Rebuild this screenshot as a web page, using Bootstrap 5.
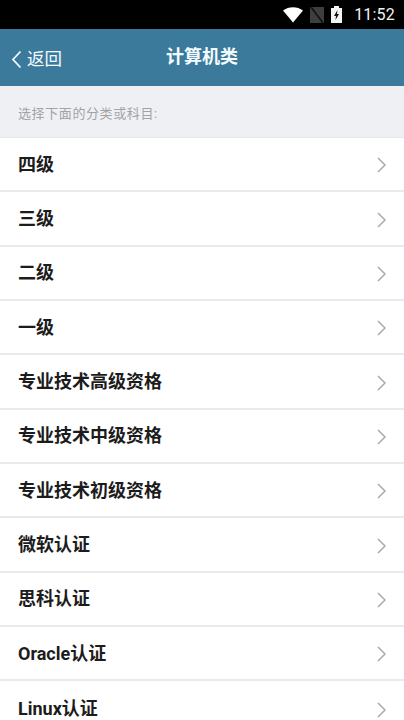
<!DOCTYPE html>
<html lang="zh-CN">
<head>
<meta charset="utf-8">
<title>计算机类</title>
<link rel="stylesheet" href="https://cdn.jsdelivr.net/npm/bootstrap@5.3.0/dist/css/bootstrap.min.css">
<style>
html,body{height:720px;overflow:hidden}
body{background:#eff0f4;font-family:Roboto,"Noto Sans CJK SC",sans-serif}
.sbar{height:29px;background:#000;color:#f2f2f2;font-size:16px;padding-right:9px;gap:7px}
.sbar .tm{margin-left:5px;line-height:1;letter-spacing:.2px}
.hdr{height:57px;background:#3b7a9b;color:#f4fbff}
.hdr .back{left:11px;top:0;bottom:0;font-size:17.5px;gap:5px;padding-top:4px}
.hdr .ttl{font-size:18px;font-weight:700;margin-top:-3px}
.hint{height:52px;font-size:13px;color:#a2a3a6;padding:5px 0 0 18px;letter-spacing:.6px;border-bottom:1px solid #e6e7ea}
.rows{background:#fff}
.rows .rowi{height:54.35px;padding:0 18px;font-size:18px;font-weight:700;color:#1c1c1c;border-width:0 0 2px;border-style:solid;border-color:#e9eaed;background:#fff}
.rowi svg{margin-top:2px}
</style>
</head>
<body>
<div class="sbar d-flex align-items-center justify-content-end">
<svg width="20" height="16" viewBox="0 0 20 16"><path d="M0 3.5C5.5-1 14.500-1 20 3.500L10 15.500Z" fill="#fff"/></svg>
<svg width="14" height="16" viewBox="0 0 14 16"><path d="M0 16V0H14V16Z" fill="#3e3e3e"/><path d="M1 0L13 16" stroke="#111" stroke-width="1.600"/></svg>
<svg width="11" height="17" viewBox="0 0 11 17"><path d="M3 0H8V2H11V17H0V2H3Z" fill="#f5f5f5"/><path d="M6.500 4L3 10H5L4.500 14L8 8H6Z" fill="#111"/></svg>
<span class="tm">11:52</span>
</div>
<div class="hdr position-relative d-flex align-items-center justify-content-center">
<div class="back position-absolute d-flex align-items-center">
<svg width="11" height="19" viewBox="0 0 11 19" fill="none"><path d="M9.500 1.500L2 9.500L9.500 17.500" stroke="#f4fbff" stroke-width="1.800"/></svg>
<span>返回</span>
</div>
<div class="ttl">计算机类</div>
</div>
<div class="hint d-flex align-items-center">选择下面的分类或科目:</div>
<div class="rows list-group list-group-flush rounded-0">
<div class="rowi list-group-item d-flex align-items-center justify-content-between"><span>四级</span><svg width="9" height="16" viewBox="0 0 9 16" fill="none"><path d="M1 1L8 8L1 15" stroke="#a9a9ab" stroke-width="1.500"/></svg></div>
<div class="rowi list-group-item d-flex align-items-center justify-content-between"><span>三级</span><svg width="9" height="16" viewBox="0 0 9 16" fill="none"><path d="M1 1L8 8L1 15" stroke="#a9a9ab" stroke-width="1.500"/></svg></div>
<div class="rowi list-group-item d-flex align-items-center justify-content-between"><span>二级</span><svg width="9" height="16" viewBox="0 0 9 16" fill="none"><path d="M1 1L8 8L1 15" stroke="#a9a9ab" stroke-width="1.500"/></svg></div>
<div class="rowi list-group-item d-flex align-items-center justify-content-between"><span>一级</span><svg width="9" height="16" viewBox="0 0 9 16" fill="none"><path d="M1 1L8 8L1 15" stroke="#a9a9ab" stroke-width="1.500"/></svg></div>
<div class="rowi list-group-item d-flex align-items-center justify-content-between"><span>专业技术高级资格</span><svg width="9" height="16" viewBox="0 0 9 16" fill="none"><path d="M1 1L8 8L1 15" stroke="#a9a9ab" stroke-width="1.500"/></svg></div>
<div class="rowi list-group-item d-flex align-items-center justify-content-between"><span>专业技术中级资格</span><svg width="9" height="16" viewBox="0 0 9 16" fill="none"><path d="M1 1L8 8L1 15" stroke="#a9a9ab" stroke-width="1.500"/></svg></div>
<div class="rowi list-group-item d-flex align-items-center justify-content-between"><span>专业技术初级资格</span><svg width="9" height="16" viewBox="0 0 9 16" fill="none"><path d="M1 1L8 8L1 15" stroke="#a9a9ab" stroke-width="1.500"/></svg></div>
<div class="rowi list-group-item d-flex align-items-center justify-content-between"><span>微软认证</span><svg width="9" height="16" viewBox="0 0 9 16" fill="none"><path d="M1 1L8 8L1 15" stroke="#a9a9ab" stroke-width="1.500"/></svg></div>
<div class="rowi list-group-item d-flex align-items-center justify-content-between"><span>思科认证</span><svg width="9" height="16" viewBox="0 0 9 16" fill="none"><path d="M1 1L8 8L1 15" stroke="#a9a9ab" stroke-width="1.500"/></svg></div>
<div class="rowi list-group-item d-flex align-items-center justify-content-between"><span>Oracle认证</span><svg width="9" height="16" viewBox="0 0 9 16" fill="none"><path d="M1 1L8 8L1 15" stroke="#a9a9ab" stroke-width="1.500"/></svg></div>
<div class="rowi list-group-item d-flex align-items-center justify-content-between"><span>Linux认证</span><svg width="9" height="16" viewBox="0 0 9 16" fill="none"><path d="M1 1L8 8L1 15" stroke="#a9a9ab" stroke-width="1.500"/></svg></div>
</div>
<script src="https://cdn.jsdelivr.net/npm/bootstrap@5.3.0/dist/js/bootstrap.bundle.min.js"></script>
</body>
</html>
